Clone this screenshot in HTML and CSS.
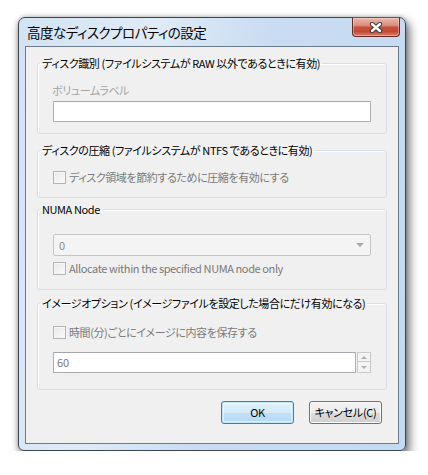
FILE: index.html
```html
<!DOCTYPE html>
<html lang="ja">
<head>
<meta charset="utf-8">
<link rel="stylesheet" href="styles.css">
</head>
<body>
<div class="window">
  <div class="titlebar">
    <span class="title">高度なディスクプロパティの設定</span>
    <div class="close">
      <svg width="14" height="11" viewBox="0 0 14 11">
        <path d="M3 2 L11 9 M11 2 L3 9" stroke="#3b3b3b" stroke-width="4.4" stroke-linecap="round"/>
        <path d="M3 2 L11 9 M11 2 L3 9" stroke="#ffffff" stroke-width="2.4" stroke-linecap="round"/>
      </svg>
    </div>
  </div>
  <div class="client">
    <fieldset class="group g1">
      <legend>ディスク識別 (ファイルシステムが RAW 以外であるときに有効)</legend>
      <div class="caption">ボリュームラベル</div>
      <div class="textbox"></div>
    </fieldset>

    <fieldset class="group g2">
      <legend>ディスクの圧縮 (ファイルシステムが NTFS であるときに有効)</legend>
      <div class="check"><span class="cb"></span><span>ディスク領域を節約するために圧縮を有効にする</span></div>
    </fieldset>

    <fieldset class="group g3">
      <legend>NUMA Node</legend>
      <div class="combo"><span>0</span><span class="arrow"></span></div>
      <div class="check"><span class="cb"></span><span>Allocate within the specified NUMA node only</span></div>
    </fieldset>

    <fieldset class="group g4">
      <legend>イメージオプション (イメージファイルを設定した場合にだけ有効になる)</legend>
      <div class="check"><span class="cb"></span><span>時間(分)ごとにイメージに内容を保存する</span></div>
      <div class="spinrow">
        <div class="textbox num">60</div>
        <div class="spin">
          <div class="sp up"><span></span></div>
          <div class="sp down"><span></span></div>
        </div>
      </div>
    </fieldset>

    <div class="buttons">
      <div class="btn default">OK</div>
      <div class="btn">キャンセル(C)</div>
    </div>
  </div>
</div>
</body>
</html>
```
FILE: styles.css
```css
* { box-sizing: border-box; }
html, body { margin: 0; padding: 0; background: #ffffff; }
body {
  font-family: "Noto Sans CJK JP", "Noto Sans", sans-serif;
  font-feature-settings: "palt";
  color: #000;
}
.window {
  width: 388px;
  margin: 17px 0 0 18px;
  border: 1px solid #3a4654;
  border-radius: 7px 7px 6px 6px;
  padding: 0 6px 6px;
  background: linear-gradient(100deg, #d3e3f4 0%, #dfebf7 30%, #c9dcf1 55%, #c5daf1 100%);
  box-shadow: 3px 5px 10px 1px rgba(0,0,0,0.5), 0 0 4px rgba(0,0,0,0.25);
}
.titlebar {
  display: flex;
  justify-content: space-between;
  align-items: flex-start;
  height: 28px;
}
.title {
  font-size: 13.5px;
  letter-spacing: -0.5px;
  line-height: 28px;
  padding-left: 2px;
  white-space: nowrap;
}
.close {
  width: 48px;
  height: 20px;
  margin-top: -1px;
  margin-right: -1px;
  border: 1px solid #6a2a22;
  border-top-color: #8a4038;
  border-radius: 0 0 4px 4px;
  background: linear-gradient(#eab4a8 0%, #dc9180 40%, #c7503b 52%, #c54a34 75%, #d8806a 100%);
  box-shadow: inset 0 0 0 1px rgba(255,255,255,0.35);
  display: flex;
  align-items: center;
  justify-content: center;
}
.close svg { display: block; }
.client {
  border: 1px solid #6b7b8b;
  background: #f0f0f0;
  padding: 0 0 19px;
}
.group {
  margin: 0 11px;
  padding: 0 15px;
  min-width: 0;
  border: 1px solid #d5dfe5;
  border-radius: 3px;
  box-shadow: inset 1px 1px 0 #fff;
}
.group legend {
  font-size: 11px;
  line-height: 14px;
  padding: 0 2px;
  margin-left: -13px;
  white-space: nowrap;
  letter-spacing: -0.4px;
}
.g1 { margin-top: 9px; padding-top: 13px; padding-bottom: 11px; }
.g2 { margin-top: 9px; padding-top: 13px; padding-bottom: 12px; }
.g3 { margin-top: 4px; padding-top: 18px; padding-bottom: 13px; }
.g4 { margin-top: 6px; padding-top: 15px; padding-bottom: 16px; }

.caption {
  font-size: 11px;
  line-height: 15px;
  color: #a3a3a3;
  margin-left: -1px;
  letter-spacing: -0.4px;
}
.textbox {
  height: 21px;
  margin-top: 3px;
  background: #fff;
  border: 1px solid #abadb3;
  border-top-color: #a3a6ad;
  border-radius: 1px;
}
.check {
  display: flex;
  align-items: center;
  gap: 3px;
  font-size: 11px;
  line-height: 15px;
  color: #7a7a7a;
  white-space: nowrap;
  letter-spacing: -0.4px;
}
.cb {
  width: 13px;
  height: 13px;
  flex: none;
  border: 1px solid #b4b4b4;
  background: linear-gradient(135deg, #e8e8e8, #fbfbfb);
  box-shadow: inset 0 0 0 1px #f6f6f6;
}
.combo {
  height: 22px;
  border: 1px solid #c2c5c9;
  border-radius: 2px;
  background: #f4f4f4;
  display: flex;
  align-items: center;
  justify-content: space-between;
  padding: 0 4px 0 5px;
  font-size: 11px;
  color: #8a8a8a;
  margin-bottom: 5px;
}
.arrow {
  width: 0; height: 0;
  border-left: 4px solid transparent;
  border-right: 4px solid transparent;
  border-top: 4px solid #a8a8a8;
  margin-right: 2px;
}
.g4 .check { margin-bottom: 12px; }
.spinrow { display: flex; gap: 1px; }
.textbox.num {
  flex: 1;
  margin-top: 0;
  font-size: 11px;
  line-height: 19px;
  padding-left: 3px;
  color: #7a7a7a;
}
.spin { width: 14px; display: flex; flex-direction: column; }
.sp {
  height: 10px;
  border: 1px solid #c9c9c9;
  background: #f4f4f4;
  display: flex;
  align-items: center;
  justify-content: center;
}
.sp.down { height: 11px; border-top: none; }
.sp span { width: 0; height: 0; border-left: 3px solid transparent; border-right: 3px solid transparent; }
.sp.up span { border-bottom: 3px solid #b0b0b0; }
.sp.down span { border-top: 3px solid #b0b0b0; }

.buttons {
  display: flex;
  justify-content: flex-end;
  gap: 15px;
  margin-top: 11px;
  padding-right: 16px;
}
.btn {
  width: 73px;
  height: 23px;
  border: 1px solid #707070;
  border-radius: 3px;
  background: linear-gradient(#f2f2f2 0%, #ebebeb 50%, #dddddd 51%, #cfcfcf 100%);
  box-shadow: inset 0 0 0 1px #fcfcfc;
  font-size: 11px;
  line-height: 21px;
  text-align: center;
  white-space: nowrap;
  letter-spacing: -0.3px;
}
.btn.default {
  border-color: #3c7fb1;
  background: linear-gradient(#e3f1fb 0%, #d4eaf9 50%, #c2e0f7 51%, #b6d9f4 100%);
  box-shadow: inset 0 0 0 1px #bde4f8, inset 0 0 0 2px rgba(255,255,255,0.5);
}
```
